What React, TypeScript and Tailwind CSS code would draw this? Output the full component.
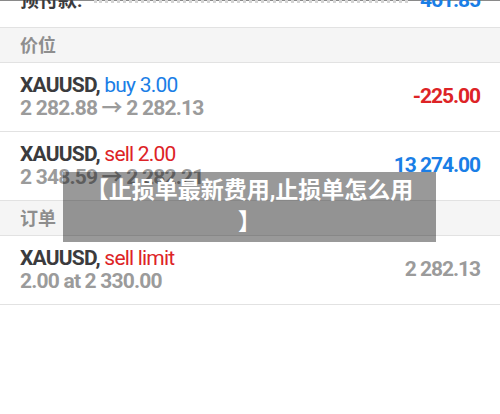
const font = { fontFamily: "Roboto, 'Noto Sans CJK SC', sans-serif" };

type Pos = {
  symbol: string;
  side: string;
  sideColor: string;
  detail: string;
  value: string;
  valueColor: string;
};

const positions: Pos[] = [
  {
    symbol: "XAUUSD,",
    side: "buy 3.00",
    sideColor: "text-[#1a7ee6]",
    detail: "2 282.88 \u2192 2 282.13",
    value: "-225.00",
    valueColor: "text-[#dd2326]",
  },
  {
    symbol: "XAUUSD,",
    side: "sell 2.00",
    sideColor: "text-[#dd2326]",
    detail: "2 348.59 \u2192 2 282.21",
    value: "13 274.00",
    valueColor: "text-[#1a7ee6]",
  },
];

const orders: Pos[] = [
  {
    symbol: "XAUUSD,",
    side: "sell limit",
    sideColor: "text-[#dd2326]",
    detail: "2.00 at 2 330.00",
    value: "2 282.13",
    valueColor: "text-[#9b9b9b]",
  },
];

function Row({ p }: { p: Pos }) {
  return (
    <div className="flex h-[69px] items-center justify-between border-b border-[#e2e2e2] pl-5 pr-5">
      <div className="flex flex-col tracking-[-0.05em]">
        <div className="text-[21px] leading-[23px]">
          <span className="font-bold text-[#3b3b3d]">{p.symbol}</span>{" "}
          <span className={p.sideColor}>{p.side}</span>
        </div>
        <div className="text-[21px] font-bold leading-[23px] text-[#9b9b9b]">
          {p.detail}
        </div>
      </div>
      <div className={"text-[21px] font-bold tracking-[-0.05em] " + p.valueColor}>
        {p.value}
      </div>
    </div>
  );
}

function Header({ label }: { label: string }) {
  return (
    <div className="flex h-[35px] items-center border-b border-[#e2e2e2] bg-[#f5f5f5] pl-5 text-[18px] font-bold text-[#8e8e8e]">
      {label}
    </div>
  );
}

export default function App() {
  return (
    <div className="relative h-[414px] w-[500px] overflow-hidden bg-white" style={font}>
      <div className="h-px bg-[#8a8a8a]" />
      <div className="-mt-[26px] flex h-[53px] items-center gap-3 border-b border-[#e2e2e2] pl-5 pr-5">
        <span className="text-[19px] font-bold text-[#3b3b3d]">预付款:</span>
        <span className="flex-1 border-b-[3px] border-dotted border-[#d4d4d4]" />
        <span className="text-[21px] font-bold tracking-[-0.05em] text-[#1a7ee6]">461.85</span>
      </div>
      <Header label="价位" />
      {positions.map((p, i) => (
        <Row key={i} p={p} />
      ))}
      <Header label="订单" />
      {orders.map((p, i) => (
        <Row key={i} p={p} />
      ))}

      <div className="absolute left-[63px] top-[172px] flex h-[70px] w-[373px] flex-col items-center justify-center bg-black/40 text-center text-[23px] font-bold leading-[32px] text-white">
        <span>【止损单最新费用,止损单怎么用</span>
        <span>】</span>
      </div>
    </div>
  );
}
